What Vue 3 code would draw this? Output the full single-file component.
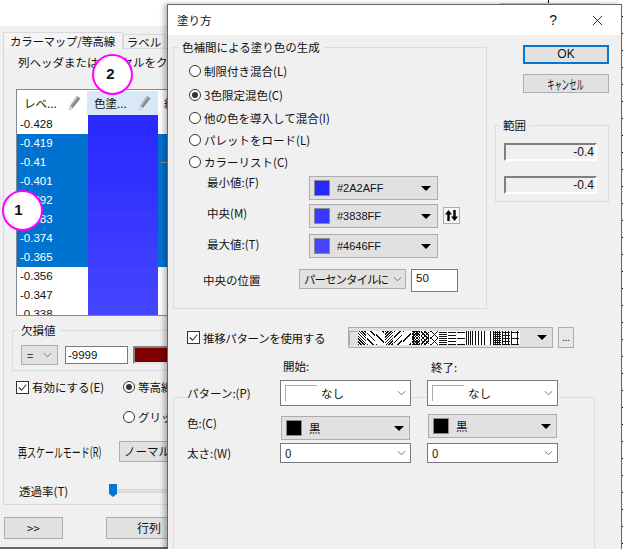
<template>
  <div class="desktop">
    <!-- 後ろのウィンドウ -->
    <div class="behind-edge"></div>
    <div class="ruler"></div>
    <div class="back-window">
      <div class="tabs">
        <div class="tab active">カラーマップ/等高線</div>
        <div class="tab">ラベル</div>
      </div>
      <div class="tab-panel">
        <p class="hint">列ヘッダまたはこのセルをクリック</p>
        <div class="level-table">
          <div class="level-head">
            <div class="head-cell first">
              <span>レベ...</span>
              <svg class="pencil" viewBox="0 0 13 16"><path d="M9 1l3.500 2.500-7.500 9.500-3-2z" fill="#8a8a8a" /><path d="M9 1l1.500 1-7.500 9.500-1-.7z" fill="#b5b5b5" /><path d="M2 11l3 2-3.600 2z" fill="#e8e8e8" stroke="#999" stroke-width=".5" /></svg>
            </div>
            <div class="head-cell picked">
              <span>色塗...</span>
              <svg class="pencil" viewBox="0 0 13 16"><path d="M9 1l3.500 2.500-7.500 9.500-3-2z" fill="#8a8a8a" /><path d="M9 1l1.500 1-7.500 9.500-1-.7z" fill="#b5b5b5" /><path d="M2 11l3 2-3.600 2z" fill="#fff" stroke="#999" stroke-width=".5" /></svg>
            </div>
            <div class="head-cell last"><span>線</span></div>
          </div>
          <div v-for="row in levels" :key="row.value" class="level-row" :class="{ selected: row.selected }">
            <div class="value">{{ row.value }}</div>
            <div class="swatch" :style="{ background: row.color }"></div>
            <i v-if="row.line" class="line-sample"></i>
          </div>
        </div>

        <fieldset class="missing">
          <legend>欠損値</legend>
          <div class="missing-row">
            <div class="mini-select">= <svg class="chev" viewBox="0 0 10 6"><path d="M1 1l4 4 4-4" /></svg></div>
            <div class="mini-input">-9999</div>
            <div class="dark-red"></div>
          </div>
        </fieldset>

        <div class="enable-row">
          <label class="check"><span class="box"><svg viewBox="0 0 12 12"><path d="M2 6l3 3 5-6" /></svg></span>有効にする(E)</label>
          <div class="radio-col">
            <label class="radio"><span class="dot on"></span>等高線</label>
            <label class="radio"><span class="dot"></span>グリッド</label>
          </div>
        </div>

        <div class="rescale-row">
          <div class="rescale-label"><span class="squeeze-left">再スケールモード(R)</span></div>
          <div class="plain-btn">ノーマル</div>
        </div>
        <div class="alpha-row">
          <div class="alpha-label">透過率(T)</div>
          <div class="slider"><span class="thumb"></span></div>
        </div>
      </div>
      <div class="back-buttons">
        <div class="plain-btn more">&gt;&gt;</div>
        <div class="plain-btn matrix">行列</div>
      </div>
    </div>

    <span class="callout one">1</span>
    <span class="callout two">2</span>

    <!-- 塗り方ダイアログ -->
    <div class="dialog">
      <div class="titlebar">
        <span>塗り方</span>
        <div class="title-actions">
          <span class="help">?</span>
          <svg class="close" viewBox="0 0 12 12"><path d="M1 1l10 10M11 1L1 11" /></svg>
        </div>
      </div>
      <div class="dialog-body">
        <div class="top-area">
          <fieldset class="gen-group">
            <legend>色補間による塗り色の生成</legend>
            <div class="gen-inner">
              <label v-for="opt in options" :key="opt.text" class="radio" :class="opt.cls">
                <span class="dot" :class="{ on: opt.on }"></span>{{ opt.text }}
              </label>
              <div class="color-grid">
                <span class="lbl-min">最小値:(F)</span>
                <div class="color-select"><i style="background:#2a2aff"></i>#2A2AFF<b class="arrow"></b></div>
                <span></span>
                <span class="lbl-mid">中央(M)</span>
                <div class="color-select"><i style="background:#3838ff"></i>#3838FF<b class="arrow"></b></div>
                <div class="swap">
                  <svg viewBox="0 0 15 15"><path d="M4.500 2L1 6.500h2.300V13h2.400V6.500H8zM10.500 13L14 8.500h-2.300V2H9.300v6.500H7z" /></svg>
                </div>
                <span class="lbl-max">最大値:(T)</span>
                <div class="color-select"><i style="background:#4646ff"></i>#4646FF<b class="arrow"></b></div>
                <span></span>
              </div>
              <div class="center-row">
                <span class="center-label">中央の位置</span>
                <div class="mode-select"><span>パーセンタイルに</span><svg class="chev" viewBox="0 0 10 6"><path d="M1 1l4 4 4-4" /></svg></div>
                <div class="num-input">50</div>
              </div>
            </div>
          </fieldset>
          <div class="side">
            <div class="dlg-btn ok">OK</div>
            <div class="dlg-btn"><span class="squeeze">キャンセル</span></div>
            <fieldset class="range">
              <legend>範囲</legend>
              <div class="range-inner">
                <div class="range-box">-0.4</div>
                <div class="range-box">-0.4</div>
              </div>
            </fieldset>
          </div>
        </div>

        <div class="pattern-row">
          <label class="check"><span class="box"><svg viewBox="0 0 12 12"><path d="M2 6l3 3 5-6" /></svg></span>推移パターンを使用する</label>
          <div class="pattern-select">
            <div class="strip">
              <i class="blank"></i>
              <i v-for="(p, i) in patterns" :key="i" :style="{ backgroundImage: p }"></i>
            </div>
            <b class="arrow"></b>
          </div>
          <div class="dots-btn">...</div>
        </div>

        <div class="pattern-area">
          <div class="pattern-frame"></div>
          <div class="pattern-grid">
            <span></span>
            <span class="col-head">開始:</span>
            <span class="col-head">終了:</span>
            <span class="row-label">パターン:(P)</span>
            <div class="white-select tall"><i class="none-swatch"></i>なし<svg class="chev" viewBox="0 0 10 6"><path d="M1 1l4 4 4-4" /></svg></div>
            <div class="white-select tall"><i class="none-swatch"></i>なし<svg class="chev" viewBox="0 0 10 6"><path d="M1 1l4 4 4-4" /></svg></div>
            <span class="row-label color-label">色:(C)</span>
            <div class="black-select left"><i></i>黒<b class="arrow"></b></div>
            <div class="black-select right"><i></i>黒<b class="arrow"></b></div>
            <span class="row-label">太さ:(W)</span>
            <div class="white-select">0<svg class="chev" viewBox="0 0 10 6"><path d="M1 1l4 4 4-4" /></svg></div>
            <div class="white-select">0<svg class="chev" viewBox="0 0 10 6"><path d="M1 1l4 4 4-4" /></svg></div>
          </div>
        </div>
      </div>
    </div>
  </div>
</template>

<script setup>
const levels = [
  { value: '-0.428', color: '#2a2aff', selected: false },
  { value: '-0.419', color: '#2c2cff', selected: true },
  { value: '-0.41', color: '#2f2fff', selected: true, line: true },
  { value: '-0.401', color: '#3131ff', selected: true },
  { value: '-0.392', color: '#3434ff', selected: true },
  { value: '-0.383', color: '#3737ff', selected: true },
  { value: '-0.374', color: '#3a3aff', selected: true },
  { value: '-0.365', color: '#3d3dff', selected: true },
  { value: '-0.356', color: '#4040ff', selected: false },
  { value: '-0.347', color: '#4343ff', selected: false },
  { value: '-0.338', color: '#4646ff', selected: false },
]

const options = [
  { text: '制限付き混合(L)' },
  { text: '3色限定混色(C)', on: true },
  { text: '他の色を導入して混合(I)', cls: 'tight' },
  { text: 'パレットをロード(L)', cls: 'tight' },
  { text: 'カラーリスト(C)', cls: 'tight' },
]

const hatch = (deg, gap) =>
  `repeating-linear-gradient(${deg}deg, #111 0 1px, transparent 1px ${gap}px)`

const patterns = [
  hatch(45, 2), hatch(45, 4), hatch(45, 7), hatch(135, 2), hatch(135, 4), hatch(135, 7),
  `${hatch(45, 2)}, ${hatch(135, 2)}`, `${hatch(45, 3)}, ${hatch(135, 3)}`, `${hatch(45, 5)}, ${hatch(135, 5)}`,
  hatch(0, 2), hatch(0, 3), hatch(0, 6), hatch(90, 2), hatch(90, 3), hatch(90, 6),
  `${hatch(0, 2)}, ${hatch(90, 2)}`, `${hatch(0, 3)}, ${hatch(90, 3)}`, `${hatch(0, 6)}, ${hatch(90, 6)}`,
]
</script>

<style>
html,
body {
  margin: 0;
  background: #fff;
}
</style>

<style scoped>
.desktop {
  position: relative;
  width: 623px;
  height: 549px;
  overflow: hidden;
  background: #fff;
  font-family: "Noto Sans CJK JP", "Liberation Sans", sans-serif;
  font-size: 11.5px;
  line-height: 16px;
  color: #111;
}
fieldset {
  margin: 0;
  padding: 0;
  min-width: 0;
  box-sizing: border-box;
  border: 1px solid #dcdcdc;
}
legend {
  padding: 0 4px;
  margin-left: 4px;
  font-size: 11.5px;
  line-height: 16px;
}
.behind-edge {
  position: absolute;
  left: 500px;
  top: 0;
  width: 100px;
  height: 3px;
  border-bottom: 1px solid #ccc;
  background: linear-gradient(90deg, transparent 48px, #000 48px 49px, transparent 49px);
}
.ruler {
  position: absolute;
  right: 0;
  top: 0;
  width: 2px;
  height: 549px;
  background: repeating-linear-gradient(180deg, transparent 0 16px, #000 16px 17px);
}
.back-window {
  position: absolute;
  left: 0;
  top: 26px;
  width: 240px;
  height: 523px;
  box-sizing: border-box;
  padding: 6px 0 0 3px;
  background: #f0f0f0;
  border-bottom: 2px solid #666;
}
.tabs {
  display: flex;
  height: 16px;
  align-items: flex-end;
}
.tab {
  box-sizing: border-box;
  height: 14px;
  width: 42px;
  text-align: center;
  line-height: 14px;
  border: 1px solid #d9d9d9;
  border-bottom: none;
  background: #f0f0f0;
}
.tab.active {
  position: relative;
  height: 17px;
  width: 120px;
  margin-bottom: -1px;
  padding-left: 6px;
  text-align: left;
  line-height: 17px;
  letter-spacing: -0.3px;
  background: #f4f4f4;
  white-space: nowrap;
}
.tab-panel {
  height: 457px;
  box-sizing: border-box;
  background: #f0f0f0;
  border: 1px solid #d9d9d9;
  padding: 5px 0 0 12px;
}
.hint {
  margin: 0 0 19px 2px;
  white-space: nowrap;
  overflow: hidden;
  width: 170px;
}
.level-table {
  width: 224px;
  height: 227px;
  overflow: hidden;
  box-sizing: border-box;
  border: 1px solid #828790;
  background: #fff;
  padding-top: 1px;
}
.level-head {
  display: flex;
  height: 24px;
}
.head-cell {
  height: 24px;
  flex: none;
  display: flex;
  align-items: center;
  justify-content: space-between;
  box-sizing: border-box;
}
.head-cell.first {
  width: 70px;
  padding: 0 6px 0 7px;
}
.head-cell.picked {
  width: 71px;
  padding: 0 7px 0 7px;
  background: #d9e8f6;
}
.head-cell.last {
  padding-left: 6px;
}
.pencil {
  width: 13px;
  height: 16px;
}
.level-row {
  position: relative;
  display: flex;
  height: 19px;
  line-height: 19px;
}
.level-row.selected {
  background: #0073d1;
  color: #fff;
}
.value {
  width: 71px;
  padding-left: 3px;
  box-sizing: border-box;
  font-family: "Liberation Sans", sans-serif;
}
.swatch {
  width: 70px;
}
.line-sample {
  position: absolute;
  left: 144px;
  top: 9px;
  width: 8px;
  height: 1px;
  background: #b08a60;
}
.missing {
  width: 218px;
  height: 49px;
  margin: 6px 0 0 -4px;
}
.missing-row {
  display: flex;
  align-items: center;
  padding: 7px 0 0 8px;
}
.mini-select {
  width: 37px;
  height: 20px;
  box-sizing: border-box;
  padding: 0 5px;
  display: flex;
  align-items: center;
  justify-content: space-between;
  background: #e1e1e1;
  border: 1px solid #adadad;
}
.mini-input {
  box-sizing: border-box;
  width: 63px;
  height: 18px;
  margin-left: 7px;
  line-height: 16px;
  padding-left: 2px;
  background: #fff;
  border: 1px solid #7a7a7a;
  font-family: "Liberation Sans", sans-serif;
}
.dark-red {
  flex: none;
  width: 60px;
  height: 14px;
  margin-left: 5px;
  background: #800000;
  border: 2px solid #808080;
  border-right: none;
  border-bottom-color: #e4e4e4;
}
.chev {
  width: 9px;
  height: 6px;
  flex: none;
  fill: none;
  stroke: #666;
  stroke-width: 1;
}
.box {
  width: 11px;
  height: 11px;
  flex: none;
  display: inline-block;
  border: 1px solid #333;
  background: #fff;
}
.box svg {
  display: block;
  fill: none;
  stroke: #333;
  stroke-width: 1.200;
}
.check,
.radio {
  display: flex;
  align-items: center;
  gap: 3px;
  white-space: nowrap;
}
.dot {
  position: relative;
  width: 10px;
  height: 10px;
  flex: none;
  border: 1px solid #333;
  border-radius: 50%;
  background: #fff;
}
.dot.on::after {
  content: "";
  position: absolute;
  left: 2px;
  top: 2px;
  width: 6px;
  height: 6px;
  border-radius: 50%;
  background: #333;
}
.enable-row {
  display: flex;
  margin-top: 8px;
}
.enable-row .check {
  width: 107px;
  height: 16px;
}
.radio-col {
  display: flex;
  flex-direction: column;
  gap: 14px;
}
.rescale-row {
  display: flex;
  align-items: center;
  margin-top: 16px;
  white-space: nowrap;
}
.rescale-label {
  width: 101px;
  margin-left: 2px;
}
.squeeze-left {
  display: inline-block;
  font-size: 13px;
  transform: scaleX(0.69);
  transform-origin: left center;
}
.squeeze {
  display: inline-block;
  font-size: 13px;
  transform: scaleX(0.56);
}
.plain-btn {
  box-sizing: border-box;
  height: 21px;
  line-height: 19px;
  background: #e1e1e1;
  border: 1px solid #adadad;
  white-space: nowrap;
}
.rescale-row .plain-btn {
  width: 90px;
  padding-left: 4px;
}
.alpha-row {
  display: flex;
  align-items: center;
  height: 16px;
  margin-top: 21px;
}
.alpha-label {
  width: 90px;
  padding-left: 3px;
}
.slider {
  position: relative;
  width: 110px;
  height: 2px;
  background: #e0e0e0;
  border: 1px solid #d6d6d6;
}
.thumb {
  position: absolute;
  left: -1px;
  top: -6px;
  width: 8px;
  height: 13px;
  background: #0078d7;
  clip-path: polygon(0 0, 100% 0, 100% 75%, 50% 100%, 0 75%);
}
.back-buttons {
  display: flex;
  gap: 43px;
  margin: 12px 0 0 1px;
}
.back-buttons .plain-btn {
  height: 22px;
  line-height: 20px;
}
.more {
  width: 59px;
  text-align: center;
}
.matrix {
  width: 100px;
  padding-left: 30px;
  font-size: 12px;
}
.callout {
  position: absolute;
  box-sizing: border-box;
  width: 41px;
  height: 41px;
  line-height: 36px;
  text-align: center;
  border: 2px solid #f0f;
  border-radius: 50%;
  background: #fff;
  font-family: "Liberation Sans", sans-serif;
  font-size: 15px;
  font-weight: 700;
  color: #111;
}
.callout.one {
  left: 2px;
  top: 190px;
  padding-right: 8px;
}
.callout.two {
  left: 92px;
  top: 54px;
  padding-right: 4px;
}
.dialog {
  position: absolute;
  left: 167px;
  top: 4px;
  width: 455px;
  height: 560px;
  box-sizing: border-box;
  background: #f0f0f0;
  border: 1px solid #666;
  box-shadow: -3px 0 5px rgba(0, 0, 0, 0.28);
}
.titlebar {
  height: 30px;
  display: flex;
  align-items: center;
  justify-content: space-between;
  padding-left: 9px;
  background: #fff;
}
.title-actions {
  display: flex;
  align-items: center;
  gap: 35px;
  margin-right: 18px;
}
.help {
  font-size: 14px;
  font-family: "Liberation Sans", sans-serif;
}
.close {
  width: 11px;
  height: 11px;
  fill: none;
  stroke: #222;
  stroke-width: 1;
}
.dialog-body {
  padding: 4px 0 0 5px;
}
.top-area {
  display: flex;
  gap: 8px;
}
.gen-group {
  width: 314px;
  height: 270px;
}
.gen-inner {
  padding: 4px 0 0 15px;
}
.gen-inner .radio {
  height: 24px;
}
.gen-inner .radio.tight {
  height: 22px;
}
.color-grid {
  display: grid;
  grid-template-columns: 102px 129px 22px;
  grid-template-rows: 28px 30px 24px;
  align-items: start;
  padding: 3px 0 0 18px;
}
.lbl-min {
  margin-top: -2px;
}
.lbl-mid {
  margin-top: 1px;
}
.lbl-max {
  margin-top: 2px;
}
.color-select {
  box-sizing: border-box;
  height: 24px;
  display: flex;
  align-items: center;
  padding: 0 6px 0 4px;
  background: #e1e1e1;
  border: 1px solid #adadad;
  font-family: "Liberation Sans", sans-serif;
  font-size: 11px;
}
.color-select i {
  width: 14px;
  height: 14px;
  margin-right: 7px;
  border: 1px solid #8a8a8a;
}
.arrow {
  width: 0;
  height: 0;
  margin-left: auto;
  border-left: 5px solid transparent;
  border-right: 5px solid transparent;
  border-top: 5px solid #000;
}
.swap {
  width: 15px;
  height: 15px;
  margin: 3px 0 0 5px;
  background: #f5f5f5;
  border: 1px solid #adadad;
}
.swap svg {
  display: block;
  width: 15px;
  height: 15px;
}
.center-row {
  display: flex;
  align-items: flex-start;
  margin-top: 11px;
  padding-left: 14px;
}
.center-label {
  width: 96px;
  margin-top: 3px;
}
.mode-select {
  box-sizing: border-box;
  width: 107px;
  height: 20px;
  display: flex;
  align-items: center;
  justify-content: space-between;
  padding: 0 3px 0 4px;
  background: #e1e1e1;
  border: 1px solid #adadad;
  white-space: nowrap;
}
.mode-select span {
  letter-spacing: -1px;
}
.num-input {
  box-sizing: border-box;
  width: 47px;
  height: 23px;
  margin-left: 5px;
  padding-left: 4px;
  background: #fff;
  border: 1px solid #7a7a7a;
  font-family: "Liberation Sans", sans-serif;
}
.side {
  width: 114px;
  padding-top: 6px;
}
.dlg-btn {
  box-sizing: border-box;
  width: 86px;
  height: 19px;
  margin: 0 0 10px 28px;
  line-height: 17px;
  text-align: center;
  background: #e1e1e1;
  border: 1px solid #adadad;
}
.dlg-btn.ok {
  line-height: 15px;
  border: 2px solid #0078d7;
  font-family: "Liberation Sans", sans-serif;
  font-size: 12px;
}
.range {
  height: 85px;
  margin-top: 24px;
}
.range legend {
  margin-left: 3px;
}
.range-inner {
  padding: 10px 0 0 8px;
}
.range-box {
  box-sizing: border-box;
  width: 93px;
  height: 18px;
  margin-bottom: 15px;
  line-height: 15px;
  text-align: right;
  padding-right: 1px;
  border: 2px solid #808080;
  border-right-color: #fff;
  border-bottom-color: #fff;
  font-family: "Liberation Sans", sans-serif;
  font-size: 12px;
}
.pattern-row {
  display: flex;
  align-items: center;
  height: 21px;
  margin: 18px 0 0 14px;
}
.pattern-row .check {
  width: 161px;
  letter-spacing: -0.35px;
}
.pattern-select {
  box-sizing: border-box;
  width: 205px;
  height: 21px;
  display: flex;
  align-items: center;
  padding-right: 5px;
  background: #e1e1e1;
  border: 1px solid #adadad;
}
.strip {
  display: flex;
  height: 14px;
  background: #fff;
}
.strip i {
  width: 9px;
  height: 14px;
  box-sizing: border-box;
  padding-right: 1px;
  background-clip: content-box;
  background-origin: content-box;
}
.strip .blank {
  border: 1px solid #aaa;
  border-right: none;
  border-bottom: none;
  background: #e1e1e1;
}
.dots-btn {
  box-sizing: border-box;
  width: 16px;
  height: 21px;
  margin-left: 5px;
  text-align: center;
  line-height: 20px;
  font-size: 9px;
  background: #e8e8e8;
  border: 1px solid #adadad;
}
.pattern-area {
  position: relative;
  height: 200px;
}
.pattern-frame {
  position: absolute;
  left: 0;
  top: 49px;
  width: 420px;
  height: 200px;
  border: 1px solid #dcdcdc;
}
.pattern-grid {
  position: relative;
  display: grid;
  grid-template-columns: 93px 147px 131px;
  grid-template-rows: 22px 26px 37px 20px;
  align-items: start;
  padding: 10px 0 0 14px;
}
.col-head {
  padding-left: 3px;
}
.pattern-grid > :nth-child(3) {
  padding: 1px 0 0 4px;
}
.row-label {
  align-self: stretch;
  display: flex;
  align-items: center;
  background: #f0f0f0;
  white-space: nowrap;
}
.color-label {
  align-items: flex-start;
  padding-top: 9px;
}
.white-select {
  box-sizing: border-box;
  width: 131px;
  height: 20px;
  display: flex;
  align-items: center;
  padding: 0 4px;
  background: #fff;
  border: 1px solid #7a7a7a;
}
.white-select .chev {
  margin-left: auto;
}
.white-select.tall {
  height: 26px;
}
.none-swatch {
  width: 31px;
  height: 15px;
  margin-right: 4px;
  border: 1px solid #aaa;
  border-right: none;
  border-bottom: none;
}
.black-select {
  box-sizing: border-box;
  width: 129px;
  height: 24px;
  margin-left: 1px;
  display: flex;
  align-items: center;
  padding: 0 5px 0 4px;
  background: #e1e1e1;
  border: 1px solid #adadad;
}
.black-select.left {
  margin-top: 10px;
}
.black-select.right {
  margin-top: 8px;
}
.black-select i {
  width: 14px;
  height: 14px;
  margin-right: 7px;
  background: #000;
  border: 1px solid #8a8a8a;
}
</style>
